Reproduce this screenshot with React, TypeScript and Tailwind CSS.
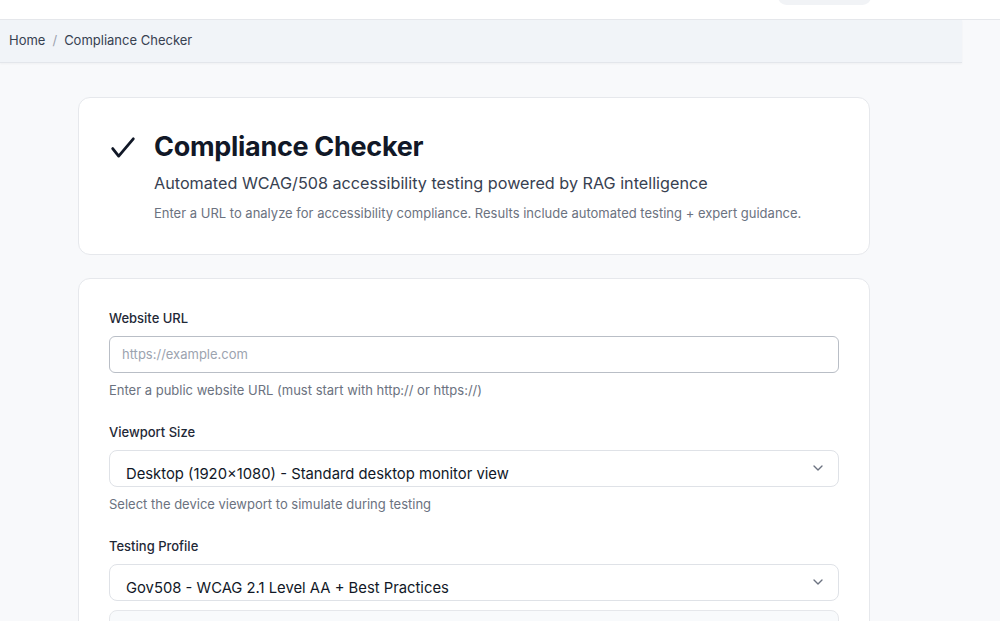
import React from 'react';
import { ChevronDown } from 'lucide-react';

const font = { fontFamily: 'Inter, "Noto Sans", sans-serif' };

function Field({ label, help, children }: { label: string; help?: string; children: React.ReactNode }) {
  return <div className="flex flex-col">
      <label className="text-[13px] font-medium text-[#1f2937] mb-[9px] leading-[18px]">{label}</label>
      {children}
      {help && <p className="mt-[8px] text-[13px] text-[#6b7280] leading-[18px]">{help}</p>}
    </div>;
}

function Select({ value }: { value: string }) {
  return <div className="flex items-center justify-between h-[37px] rounded-lg border border-[#dfe2e7] bg-white pl-4 pr-[12px]">
      <span className="text-[14.8px] text-[#111827] pt-[10px] leading-[18px]">{value}</span>
      <ChevronDown className="h-4 w-4 text-[#6b7280] -mt-[2px]" strokeWidth={2} />
    </div>;
}

export default function App() {
  return <div className="min-h-[621px] bg-[#f8f9fb] overflow-hidden" style={font}>
      {/* Top header */}
      <header className="relative h-[20px] bg-white border-b border-[#e5e7eb]">
        <div className="absolute left-[778px] top-[-12px] h-[17px] w-[93px] rounded-full bg-[#f1f3f6]"></div>
      </header>

      <div className="w-[962px]">
        {/* Breadcrumb */}
        <nav className="h-[43px] bg-[#f1f4f8] border-b border-[#e3e6eb] shadow-[0_1px_2px_rgba(0,0,0,0.04)] flex items-center pl-[9px] text-[13px] text-[#374151]">
          <span>Home</span>
          <span className="mx-[7px] text-[#9ca3af]">/</span>
          <span>Compliance Checker</span>
        </nav>

        <main className="pl-[78px] pt-[34px] flex flex-col gap-[23px]">
          {/* Header card */}
          <section className="w-[792px] h-[158px] rounded-xl border border-[#e6e8ec] bg-white pl-[31px] pt-[31px]">
            <div className="flex items-start gap-[18px]">
              <svg width="26" height="26" viewBox="0 0 24 24" fill="none" stroke="#111827" strokeWidth="2.6" strokeLinecap="round" strokeLinejoin="round" className="mt-[6px] shrink-0">
                <path d="M2.5 12.5 8 19.5 21.5 3.5" />
              </svg>
              <div className="flex flex-col">
                <h1 className="text-[27px] font-bold text-[#111827] leading-[36px] tracking-[-0.3px]">Compliance Checker</h1>
                <p className="mt-[6px] text-[16.2px] text-[#374151] leading-[24px]">Automated WCAG/508 accessibility testing powered by RAG intelligence</p>
                <p className="mt-[9px] text-[13px] text-[#6b7280] leading-[18px]">Enter a URL to analyze for accessibility compliance. Results include automated testing + expert guidance.</p>
              </div>
            </div>
          </section>

          {/* Form card */}
          <section className="w-[792px] h-[400px] rounded-xl border border-[#e6e8ec] bg-white px-[30px] pt-[30px] flex flex-col gap-[24px]">
            <Field label="Website URL" help="Enter a public website URL (must start with http:// or https://)">
              <div className="h-[37px] rounded-md border border-[#b9bec6] bg-white flex items-center pl-[12px]">
                <span className="text-[13px] text-[#9ca3af]">https://example.com</span>
              </div>
            </Field>
            <Field label="Viewport Size" help="Select the device viewport to simulate during testing">
              <Select value="Desktop (1920×1080) - Standard desktop monitor view" />
            </Field>
            <div className="flex flex-col">
              <Field label="Testing Profile">
                <Select value="Gov508 - WCAG 2.1 Level AA + Best Practices" />
              </Field>
              <div className="mt-[9px] h-[60px] rounded-lg border border-[#e5e7eb] bg-[#f8fafc]"></div>
            </div>
          </section>
        </main>
      </div>
    </div>;
}
